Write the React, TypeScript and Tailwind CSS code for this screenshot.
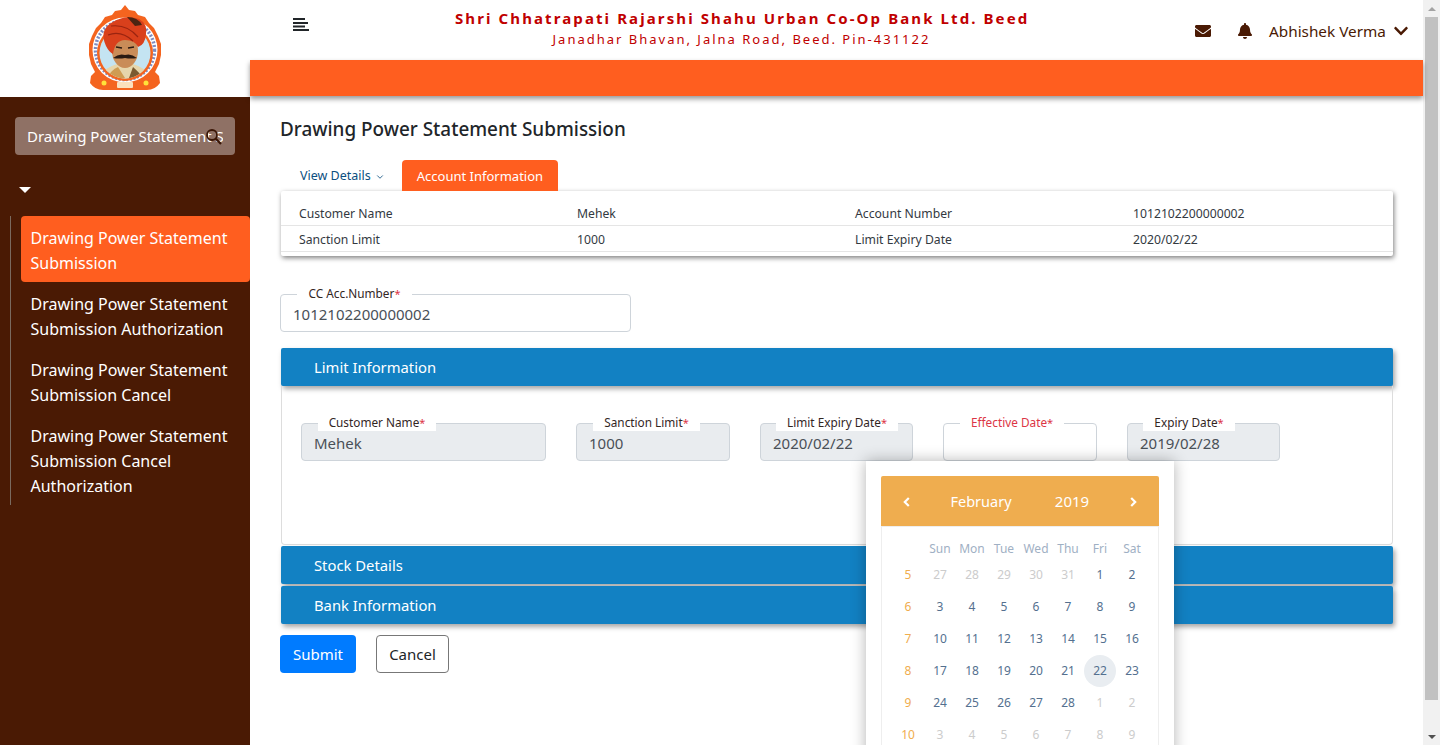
import React from "react";
import { FaEnvelope, FaBell, FaChevronDown } from "react-icons/fa";
import { ChevronDown } from "lucide-react";

function Logo() {
  return (
    <svg width="100" height="97" viewBox="0 0 100 97">
      <defs>
        <clipPath id="portrait"><circle cx="50" cy="53" r="25.5" /></clipPath>
      </defs>
      <path d="M50 5 L54 10 L60 11 L63 15 L70 17 L74 23 L79 28 L83 36 L86 44 L86 55 L84 64 L80 72 L84 76 L85 83 Q80 90 72 90 L28 90 Q20 90 15 83 L16 76 L20 72 L16 64 L14 55 L14 44 L17 36 L21 28 L26 23 L30 17 L37 15 L40 11 L46 10 Z" fill="#f4641f" />
      <circle cx="50" cy="50" r="32.5" fill="#fff" />
      <circle cx="50" cy="50" r="29.5" fill="none" stroke="#3b4f9e" strokeWidth="3.5" strokeDasharray="2 1.6" strokeOpacity="0.65" />
      <path d="M19 64 Q28 84 50 84 Q72 84 81 64 L76 82 L24 82 Z" fill="#f4641f" />
      <circle cx="50" cy="53" r="28" fill="#f4641f" />
      <circle cx="50" cy="53" r="25.5" fill="#c4e4f2" />
      <g clipPath="url(#portrait)">
        <path d="M20 82 Q28 68 42 64 L58 64 Q72 68 80 82 Z" fill="#e6d6ac" />
        <path d="M30 80 Q36 70 43 67 L50 78 L44 82 Z" fill="#cf9c52" />
        <path d="M70 80 Q64 72 58 67 L54 78 L60 82 Z" fill="#7b5a30" />
        <ellipse cx="50" cy="51" rx="13" ry="17" fill="#c98c58" />
        <path d="M38 58 Q44 53 50 55 Q56 53 62 58 Q56 59 50 58 Q44 59 38 58 Z" fill="#2a1a12" />
        <path d="M41 47 L47 48 M53 48 L59 47" stroke="#2a1a12" strokeWidth="1.6" />
      </g>
      <path d="M31 46 Q24 31 36 23 Q50 14 64 19 Q73 24 71 34 Q70 45 63 47 Q60 40 50 40 Q40 40 38 54 Q34 52 31 46 Z" fill="#d9401c" />
      <path d="M36 26 Q52 24 63 37 M33 35 Q46 30 58 41" stroke="#9a2410" strokeWidth="1.2" fill="none" />
      <path d="M52 17 Q63 17 67 25 L60 26 Z" fill="#4a2412" />
      <circle cx="29" cy="83" r="2.5" fill="#ffe23a" />
      <circle cx="71" cy="83" r="2.5" fill="#ffe23a" />
      <rect x="42" y="82" width="16" height="6" rx="1" fill="#fbe0bd" />
    </svg>
  );
}

function Req() {
  return <span className="text-[11px] text-[#dc3545]">*</span>;
}

function Field({ label, value, width, disabled, labelLeft, labelWidth, error }: { label: string; value: string; width: string; disabled?: boolean; labelLeft: string; labelWidth: string; error?: boolean }) {
  return (
    <div className={`relative h-[38px] shrink-0 rounded-[4px] border border-[#ced4da] px-3 text-[15px] leading-[38px] text-[#495057] ${width} ${disabled ? "bg-[#e9ecef]" : "bg-white"}`}>
      {value}
      <span className={`absolute top-[-9px] h-[16px] whitespace-nowrap bg-white text-center text-[11.8px] leading-[14px] ${labelLeft} ${labelWidth} ${error ? "text-[#dc3545]" : "text-[#33261f]"}`}>
        {label}<Req />
      </span>
    </div>
  );
}

function Bar({ title }: { title: string }) {
  return (
    <div className="flex h-[38px] items-center rounded-[2px] bg-[#1281c3] pl-[33px] text-[14.8px] text-white shadow-[2px_3px_5px_rgba(0,0,0,0.35)]">
      {title}
    </div>
  );
}

const names = ["", "Sun", "Mon", "Tue", "Wed", "Thu", "Fri", "Sat"];
const weeks: [string, [string, boolean][]][] = [
  ["5", [["27", true], ["28", true], ["29", true], ["30", true], ["31", true], ["1", false], ["2", false]]],
  ["6", [["3", false], ["4", false], ["5", false], ["6", false], ["7", false], ["8", false], ["9", false]]],
  ["7", [["10", false], ["11", false], ["12", false], ["13", false], ["14", false], ["15", false], ["16", false]]],
  ["8", [["17", false], ["18", false], ["19", false], ["20", false], ["21", false], ["22", false], ["23", false]]],
  ["9", [["24", false], ["25", false], ["26", false], ["27", false], ["28", false], ["1", true], ["2", true]]],
  ["10", [["3", true], ["4", true], ["5", true], ["6", true], ["7", true], ["8", true], ["9", true]]],
];

function Calendar() {
  return (
    <div className="absolute left-[616px] top-[461px] z-10 w-[308px] bg-white p-[15px] pb-0 shadow-[0_0_14px_rgba(0,0,0,0.3)]">
      <div className="flex h-[50px] items-center rounded-t-[2px] bg-[#efad4f] text-white">
        <svg className="ml-[22px] mt-[2px]" width="7" height="10" viewBox="0 0 7 10" fill="none" stroke="#fff" strokeWidth="2.2"><path d="M5.8 1 L1.8 5 L5.8 9" /></svg>
        <span className="ml-[36px] w-[70px] pt-px text-center text-[14.5px]">February</span>
        <span className="ml-[21px] w-[70px] pt-px text-center text-[15px]">2019</span>
        <svg className="ml-[23px] mt-[2px]" width="7" height="10" viewBox="0 0 7 10" fill="none" stroke="#fff" strokeWidth="2.2"><path d="M1.2 1 L5.2 5 L1.2 9" /></svg>
      </div>
      <div className="h-[300px] border-x border-t border-[#eeeeee] pl-[10px] pt-[11px]">
        <div className="grid h-[21px] grid-cols-[repeat(8,32px)] items-center text-center text-[12px] text-[#9fb0c4]">
          {names.map((n, i) => <span key={i}>{n}</span>)}
        </div>
        {weeks.map(([w, days]) => (
          <div key={w} className="grid h-[32px] grid-cols-[repeat(8,32px)] items-center text-center text-[12px]">
            <span className="text-[#f0ad4e]">{w}</span>
            {days.map(([d, muted], i) => (
              <span key={i} className={`flex h-[32px] items-center justify-center rounded-full ${muted ? "text-[#cccccc]" : "text-[#54708f]"} ${d === "22" ? "bg-[#e9edf1]" : ""}`}>{d}</span>
            ))}
          </div>
        ))}
      </div>
    </div>
  );
}

const menu = [
  ["Drawing Power Statement", "Submission"],
  ["Drawing Power Statement", "Submission Authorization"],
  ["Drawing Power Statement", "Submission Cancel"],
  ["Drawing Power Statement", "Submission Cancel", "Authorization"],
];

export default function App() {
  return (
    <div className="flex h-[745px] w-[1440px] overflow-hidden bg-white font-['Noto_Sans','Open_Sans',sans-serif] text-[#212529]">
      <aside className="flex w-[250px] shrink-0 flex-col">
        <div className="flex h-[97px] items-center justify-center bg-white"><Logo /></div>
        <div className="flex-1 bg-[#4a1a04] pt-[20px]">
          <div className="relative mx-[15px] h-[38px] rounded-[4px] bg-[#8f7165] px-3 text-[15px] leading-[38px] text-white">
            <div className="overflow-hidden whitespace-nowrap">Drawing Power Statement Submission</div>
            <svg className="absolute right-[13px] top-[12px]" width="16" height="16" viewBox="0 0 16 16" fill="none" stroke="#3a1505">
              <circle cx="6" cy="6" r="5" strokeWidth="1.8" />
              <path d="M9.8 9.8 L15 15" strokeWidth="2.2" />
            </svg>
          </div>
          <div className="ml-[19px] mt-[32px] h-0 w-0 border-x-[6px] border-t-[6px] border-x-transparent border-t-white" />
          <div className="ml-[10px] mt-[23px] border-l border-[#7a6a5f] pl-[10px]">
            {menu.map((lines, i) => (
              <div key={i} className={`rounded-[4px] px-[9.5px] pb-[6px] pt-[10px] text-[16px] leading-[25px] text-white ${i === 0 ? "bg-[#ff5e1f]" : ""}`}>
                {lines.map((l) => <div key={l} className="whitespace-nowrap">{l}</div>)}
              </div>
            ))}
          </div>
        </div>
      </aside>

      <main className="relative flex min-w-0 flex-1 flex-col">
        <header className="flex h-[60px] items-start">
          <svg className="ml-[43px] mt-[18px] shrink-0" width="16" height="13" viewBox="0 0 16 13" fill="#212529">
            <rect x="0" y="0" width="12" height="2" />
            <rect x="0" y="4" width="15" height="2" />
            <rect x="0" y="7.5" width="12" height="2" />
            <rect x="0" y="11" width="16" height="2" />
          </svg>
          <div className="ml-[146px] mt-[7px] w-[572px] shrink-0 text-center text-[#c00000]">
            <div className="whitespace-nowrap text-[15px] font-bold leading-[22px] tracking-[2.1px]">Shri Chhatrapati Rajarshi Shahu Urban Co-Op Bank Ltd. Beed</div>
            <div className="whitespace-nowrap pl-px text-[13px] leading-[20px] tracking-[2px]">Janadhar Bhavan, Jalna Road, Beed. Pin-431122</div>
          </div>
          <div className="ml-[168px] mt-[20px] flex items-center text-[#4a1a04]">
            <FaEnvelope className="text-[16px]" />
            <FaBell className="ml-[26px] text-[16px]" />
            <span className="ml-[16px] whitespace-nowrap text-[15.3px] leading-[22px]">Abhishek Verma</span>
            <FaChevronDown className="ml-[7px] text-[16px]" />
          </div>
        </header>
        <div className="h-[36px] bg-[#ff5e1f] shadow-[0_3px_5px_rgba(0,0,0,0.4)]" />

        <div className="px-[30px]">
          <h1 className="mt-[19px] text-[18.9px] font-medium leading-[28px] text-[#212529]">Drawing Power Statement Submission</h1>
          <div className="mt-[17px] flex h-[31px] items-stretch pl-[20px] text-[13px]">
            <span className="flex items-center gap-[4px] pt-[2px] text-[12.5px] text-[#0c4f80]">View Details <ChevronDown size={10} /></span>
            <span className="ml-[17px] flex items-center rounded-t-[4px] bg-[#ff5e1f] px-[15px] pt-[2px] text-white">Account Information</span>
          </div>
          <div className="ml-px h-[65px] rounded-[2px] bg-white pt-[9px] text-[12.2px] text-[#33393f] shadow-[1px_2px_5px_rgba(0,0,0,0.5)]">
            <div className="grid h-[26px] grid-cols-4 items-center border-b border-[#e5e5e5] [&>span]:pl-[18px] [&>span]:pt-[3px]">
              <span>Customer Name</span><span>Mehek</span><span>Account Number</span><span>1012102200000002</span>
            </div>
            <div className="grid h-[26px] grid-cols-4 items-center border-b border-[#e5e5e5] [&>span]:pl-[18px] [&>span]:pt-[3px]">
              <span>Sanction Limit</span><span>1000</span><span>Limit Expiry Date</span><span>2020/02/22</span>
            </div>
          </div>
          <div className="mt-[38px]">
            <Field label="CC Acc.Number" value="1012102200000002" width="w-[351px]" labelLeft="left-[16px]" labelWidth="w-[115px]" />
          </div>
          <div className="ml-px mt-[16px]">
            <Bar title="Limit Information" />
            <div className="flex h-[159px] gap-[30px] rounded-b-[4px] border border-t-0 border-[#dddddd] pl-[19px] pt-[37px]">
              <Field label="Customer Name" value="Mehek" width="w-[245px]" disabled labelLeft="left-[16px]" labelWidth="w-[118px]" />
              <Field label="Sanction Limit" value="1000" width="w-[154px]" disabled labelLeft="left-[16px]" labelWidth="w-[107px]" />
              <Field label="Limit Expiry Date" value="2020/02/22" width="w-[153px]" disabled labelLeft="left-[15px]" labelWidth="w-[122px]" />
              <Field label="Effective Date" value="" width="w-[154px]" labelLeft="left-[16px]" labelWidth="w-[104px]" error />
              <Field label="Expiry Date" value="2019/02/28" width="w-[153px]" disabled labelLeft="left-[15px]" labelWidth="w-[92px]" />
            </div>
            <div className="mt-px"><Bar title="Stock Details" /></div>
            <div className="mt-[2px]"><Bar title="Bank Information" /></div>
          </div>
          <div className="mt-[11px] flex gap-[20px]">
            <button className="h-[38px] w-[76px] rounded-[4px] bg-[#007bff] text-[15px] text-white">Submit</button>
            <button className="h-[38px] w-[73px] rounded-[4px] border border-[#777777] bg-white text-[15px] text-[#212529]">Cancel</button>
          </div>
        </div>
        <Calendar />
      </main>

      <div className="flex w-[17px] shrink-0 flex-col items-center bg-[#f1f1f1]">
        <div className="mt-[7px] h-0 w-0 border-x-[4px] border-b-[4px] border-x-transparent border-b-[#a3a3a3]" />
        <div className="mt-[6px] h-[683px] w-[13px] bg-[#c1c1c1]" />
        <div className="mt-[35px] h-0 w-0 border-x-[4px] border-t-[4px] border-x-transparent border-t-[#505050]" />
      </div>
    </div>
  );
}
